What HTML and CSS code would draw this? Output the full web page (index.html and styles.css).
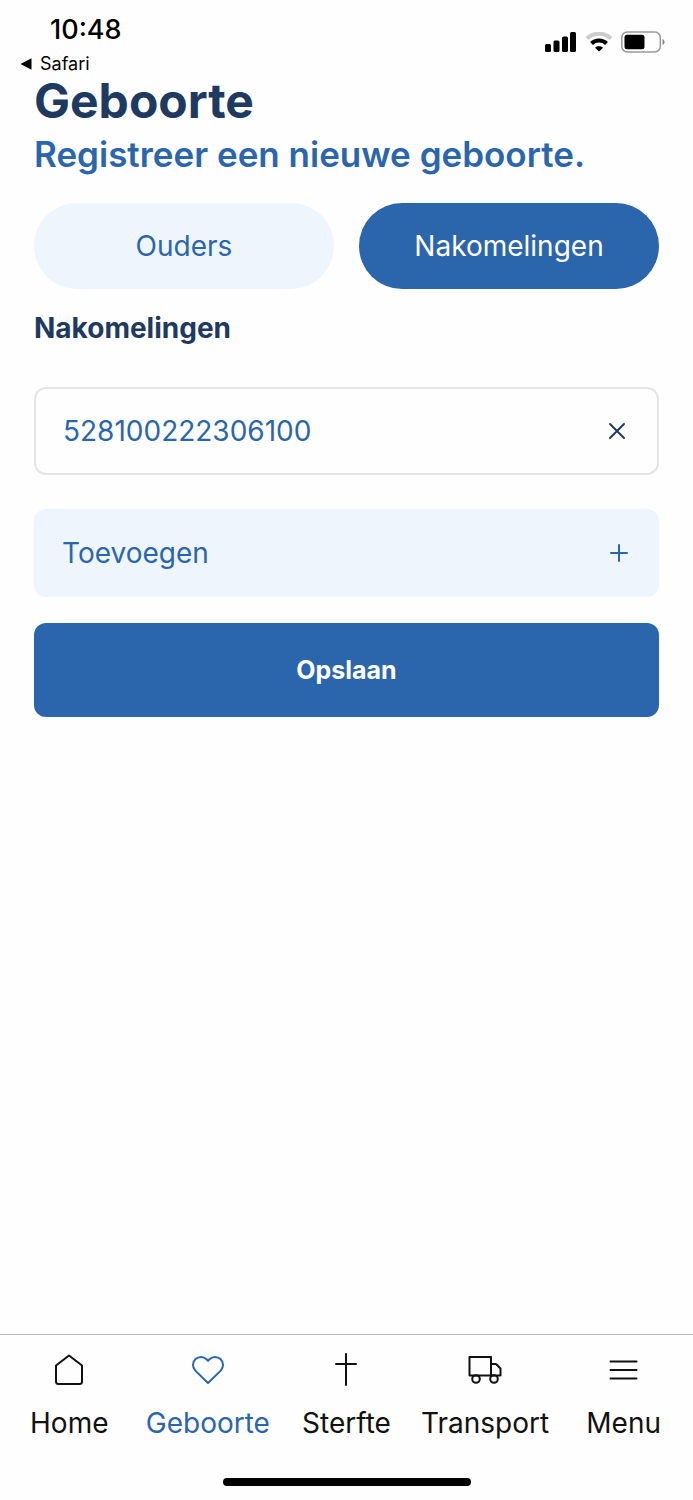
FILE: index.html
```html
<!DOCTYPE html>
<html lang="nl">
<head>
  <meta charset="UTF-8">
  <meta name="viewport" content="width=device-width, initial-scale=1.0">
  <title>Geboorte</title>
  <link rel="stylesheet" href="styles.css">
</head>
<body>
  <div class="app">
    <!-- Status bar -->
    <header class="status-bar">
      <div class="status-left">
        <time class="clock">10:48</time>
        <a class="back-link" href="#">
          <svg width="12" height="12" viewBox="0 0 12 12" aria-hidden="true"><path d="M0.500 6 11.500 0.200V11.800Z" fill="#000"/></svg>
          Safari
        </a>
      </div>
      <div class="status-icons">
        <svg width="32" height="20" viewBox="0 0 32 20" aria-hidden="true">
          <rect x="0" y="12" width="6" height="8" rx="1.500"/>
          <rect x="8.500" y="8.500" width="6" height="11.500" rx="1.500"/>
          <rect x="17" y="4.500" width="6" height="15.500" rx="1.500"/>
          <rect x="25" y="0" width="6" height="20" rx="1.500"/>
        </svg>
        <svg width="28" height="20" viewBox="0 0 28 20" fill="none" aria-hidden="true">
          <path d="M2 6.500C8.500 0 19.500 0 26 6.500" stroke="#ccc" stroke-width="4"/>
          <path d="M6.500 11.500C10.500 7.500 17.500 7.500 21.500 11.500" stroke="#000" stroke-width="4"/>
          <path d="M14 19.500 10 15.700C12.200 13.800 15.800 13.800 18 15.700Z" fill="#000"/>
        </svg>
        <svg width="44" height="22" viewBox="0 0 44 22" aria-hidden="true">
          <rect x="0.800" y="1" width="38.500" height="20" rx="5.500" fill="none" stroke="#999" stroke-width="1.500"/>
          <rect x="3.500" y="3.800" width="20" height="14.400" rx="2.500"/>
          <path d="M41.500 8C44.200 9 44.200 13 41.500 14Z" fill="#888"/>
        </svg>
      </div>
    </header>

    <!-- Form -->
    <main class="content">
      <h1 class="title">Geboorte</h1>
      <p class="subtitle">Registreer een nieuwe geboorte.</p>

      <div class="tabs">
        <button class="tab" type="button">Ouders</button>
        <button class="tab active" type="button">Nakomelingen</button>
      </div>

      <h2 class="section-title">Nakomelingen</h2>

      <div class="row item">
        <span>528100222306100</span>
        <button class="remove" type="button" aria-label="Verwijderen">
          <svg width="18" height="18" viewBox="0 0 18 18" aria-hidden="true"><path d="M2 2 16 16M16 2 2 16"/></svg>
        </button>
      </div>

      <button class="row add" type="button">
        <span>Toevoegen</span>
        <svg width="18" height="18" viewBox="0 0 18 18" aria-hidden="true"><path d="M9 1V17M1 9H17"/></svg>
      </button>

      <button class="save" type="button">Opslaan</button>
    </main>

    <!-- Bottom navigation -->
    <nav class="tab-bar">
      <a class="nav-item" href="#">
        <svg width="36" height="36" viewBox="0 0 36 36" aria-hidden="true"><path d="M5 13.500 18 3.500 31 13.500V29.500Q31 32 28.500 32H7.500Q5 32 5 29.500Z"/></svg>
        Home
      </a>
      <a class="nav-item current" href="#">
        <svg width="36" height="36" viewBox="0 0 36 36" aria-hidden="true"><path d="M18 31 5.300 18.600C2.200 15.300 2.200 10.300 5.300 7.300C8.500 4.200 13.400 4.200 16.500 7.300L18 8.900 19.500 7.300C22.600 4.200 27.500 4.200 30.700 7.300C33.800 10.300 33.800 15.300 30.700 18.600Z"/></svg>
        Geboorte
      </a>
      <a class="nav-item" href="#">
        <svg width="36" height="36" viewBox="0 0 36 36" aria-hidden="true"><path d="M18 2V33M8 12H28"/></svg>
        Sterfte
      </a>
      <a class="nav-item" href="#">
        <svg width="36" height="36" viewBox="0 0 36 36" aria-hidden="true">
          <path d="M2.500 5H24V23.500H2.500ZM24 12H29L33.500 16.500V23.500H24"/>
          <circle cx="9" cy="27" r="3.800"/>
          <circle cx="27" cy="27" r="3.800"/>
        </svg>
        Transport
      </a>
      <a class="nav-item" href="#">
        <svg width="36" height="36" viewBox="0 0 36 36" aria-hidden="true"><path d="M4.500 9.500H30.500M4.500 18H30.500M4.500 26.500H30.500"/></svg>
        Menu
      </a>
    </nav>
    <div class="home-indicator"></div>
  </div>
</body>
</html>
```
FILE: styles.css
```css
* {
  box-sizing: border-box;
}

body {
  margin: 0;
  font-family: Inter, 'Liberation Sans', sans-serif;
  font-size: 28px;
  color: #111;
  background-color: #fefefe;
}

button {
  font-family: inherit;
  font-size: inherit;
  border: none;
  cursor: pointer;
}

a {
  color: inherit;
  text-decoration: none;
}

svg {
  flex-shrink: 0;
}

.app {
  display: flex;
  flex-direction: column;
  min-height: 100vh;
}

.status-bar {
  display: flex;
  justify-content: space-between;
  padding: 14px 28px 0 20px;
  color: #000;
}

.status-left {
  display: flex;
  flex-direction: column;
  gap: 6px;
}

.clock {
  padding-left: 30px;
  font-size: 27px;
  font-weight: 500;
  line-height: 32px;
}

.back-link {
  display: flex;
  align-items: center;
  gap: 8px;
  font-size: 18px;
  line-height: 24px;
}

.status-icons {
  display: flex;
  align-items: center;
  gap: 8px;
  height: 55px;
}

.content {
  flex: 1;
  display: flex;
  flex-direction: column;
  padding: 0 34px;
}

.title {
  margin: 0;
  font-size: 48px;
  font-weight: 700;
  line-height: 50px;
  color: #1e3a60;
}

.subtitle {
  margin: 0 0 20px;
  font-size: 35px;
  font-weight: 600;
  line-height: 57px;
  color: #2b66ac;
}

.tabs {
  display: flex;
  gap: 25px;
}

.tab {
  flex: 1;
  padding: 0;
  height: 86px;
  border-radius: 43px;
  background-color: #eef5fd;
  color: #2b66ac;
}

.active {
  background-color: #2b66ac;
  color: #fff;
}

.section-title {
  margin: 19px 0 39px;
  font-size: 28px;
  font-weight: 700;
  line-height: 40px;
  color: #1e3a60;
}

.row {
  display: flex;
  justify-content: space-between;
  align-items: center;
  height: 88px;
  padding: 0 31px 0 28px;
  border-radius: 12px;
  color: #2b66ac;
}

.row svg {
  fill: none;
  stroke: currentColor;
  stroke-width: 2;
  stroke-linecap: round;
}

.item {
  padding-left: 27px;
  border: 2px solid #e5e5e5;
}

.remove {
  display: flex;
  padding: 0;
  background: none;
  color: #1e3a60;
}

.add {
  margin-top: 34px;
  background-color: #eef5fd;
}

.save {
  height: 94px;
  margin-top: 26px;
  border-radius: 12px;
  background-color: #2b66ac;
  color: #fff;
  font-size: 25px;
  font-weight: 700;
}

.tab-bar {
  display: grid;
  grid-template-columns: repeat(5, 1fr);
  padding-top: 17px;
  border-top: 1px solid #bbb;
}

.nav-item {
  display: flex;
  flex-direction: column;
  align-items: center;
  gap: 15px;
  line-height: 40px;
}

.nav-item svg {
  fill: none;
  stroke: currentColor;
  stroke-width: 2;
  stroke-linecap: round;
  stroke-linejoin: round;
}

.current {
  color: #2b66ac;
}

.home-indicator {
  width: 248px;
  height: 8px;
  margin: 35px auto 14px;
  border-radius: 4px;
  background-color: #000;
}
```
